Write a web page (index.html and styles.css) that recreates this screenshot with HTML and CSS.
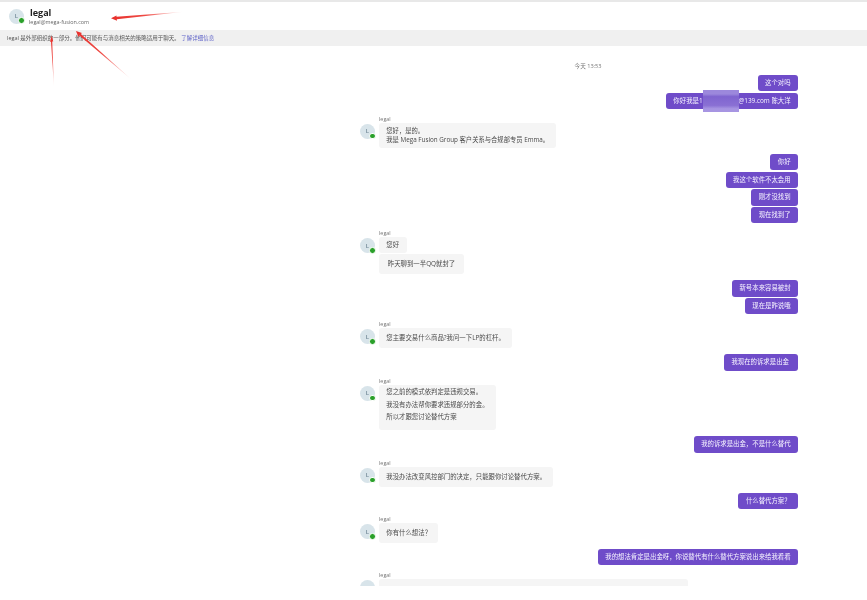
FILE: index.html
```html
<!DOCTYPE html>
<html lang="zh">
<head>
<meta charset="utf-8">
<title>legal</title>
<link rel="stylesheet" href="styles.css">
</head>
<body>
<div class="page">
  <header class="head">
    <div class="avatar avatar-big">L<span class="dot"></span></div>
    <div class="who">
      <div class="name">legal</div>
      <div class="mail">legal@mega-fusion.com</div>
    </div>
  </header>
  <div class="banner">legal 是外部组织的一部分。他们可能有与消息相关的策略适用于聊天。 <a class="link">了解详细信息</a></div>
  <main class="chat">
    <div class="time">今天 13:53</div>
    <section class="mine">
      <div class="out">这个对吗</div>
      <div class="out">你好我是1<span class="hidden-part"></span>@139.com 陈大洋</div>
    </section>
    <section class="theirs">
      <div class="avatar">L<span class="dot"></span></div>
      <div class="col">
        <div class="sender">legal</div>
        <div class="in in-tall">您好&#xFF0C;是的。<br>我是 Mega Fusion Group 客户关系与合规部专员 Emma。</div>
      </div>
    </section>
    <section class="mine">
      <div class="out">你好</div>
      <div class="out">我这个软件不太会用</div>
      <div class="out">刚才没找到</div>
      <div class="out">现在找到了</div>
    </section>
    <section class="theirs">
      <div class="avatar">L<span class="dot"></span></div>
      <div class="col">
        <div class="sender">legal</div>
        <div class="in in-short">您好</div>
        <div class="in in-wide">昨天聊到一半QQ就封了</div>
      </div>
    </section>
    <section class="mine">
      <div class="out">新号本来容易被封</div>
      <div class="out">现在是昨说哦</div>
    </section>
    <section class="theirs">
      <div class="avatar">L<span class="dot"></span></div>
      <div class="col">
        <div class="sender">legal</div>
        <div class="in">您主要交易什么商品?我问一下LP的杠杆。</div>
      </div>
    </section>
    <section class="mine">
      <div class="out">我现在的诉求是出金&nbsp;</div>
    </section>
    <section class="theirs">
      <div class="avatar">L<span class="dot"></span></div>
      <div class="col">
        <div class="sender">legal</div>
        <div class="in in-lines">
          <p>您之前的模式依判定是违规交易。</p>
          <p>我没有办法帮你要求违规部分的金。</p>
          <p>所以才跟您讨论替代方案</p>
        </div>
      </div>
    </section>
    <section class="mine">
      <div class="out">我的诉求是出金&#xFF0C;不是什么替代</div>
    </section>
    <section class="theirs">
      <div class="avatar">L<span class="dot"></span></div>
      <div class="col">
        <div class="sender">legal</div>
        <div class="in">我没办法改变风控部门的决定&#xFF0C;只能跟你讨论替代方案。</div>
      </div>
    </section>
    <section class="mine">
      <div class="out">什么替代方案&#xFF1F;</div>
    </section>
    <section class="theirs">
      <div class="avatar">L<span class="dot"></span></div>
      <div class="col">
        <div class="sender">legal</div>
        <div class="in">你有什么想法&#xFF1F;</div>
      </div>
    </section>
    <section class="mine">
      <div class="out">我的想法肯定是出金呀&#xFF0C;你说替代有什么替代方案说出来给我看看</div>
    </section>
    <section class="theirs">
      <div class="avatar">L<span class="dot"></span></div>
      <div class="col">
        <div class="sender">legal</div>
        <div class="in in-cut"></div>
      </div>
    </section>
  </main>
</div>
<div class="patch"></div>
<svg class="marks" width="867" height="600" viewBox="0 0 867 600" aria-hidden="true">
  <defs>
    <linearGradient id="fa" gradientUnits="userSpaceOnUse" x1="112" y1="18" x2="184" y2="12"><stop offset="0" stop-color="#e8302c"/><stop offset=".45" stop-color="#ee4a44"/><stop offset="1" stop-color="#ee3a34" stop-opacity="0"/></linearGradient>
    <linearGradient id="fb" gradientUnits="userSpaceOnUse" x1="76" y1="31" x2="132" y2="80"><stop offset="0" stop-color="#e8302c"/><stop offset=".45" stop-color="#ee4a44"/><stop offset="1" stop-color="#ee3a34" stop-opacity="0"/></linearGradient>
    <linearGradient id="fc" gradientUnits="userSpaceOnUse" x1="52" y1="36" x2="54" y2="88"><stop offset="0" stop-color="#e8302c"/><stop offset=".45" stop-color="#ee4a44"/><stop offset="1" stop-color="#ee3a34" stop-opacity="0"/></linearGradient>
  </defs>
  <polygon fill="url(#fa)" points="111,18.3 116.5,15.4 116.5,16.8 184,11.7 116.8,19.2 117,20.7"/>
  <polygon fill="url(#fb)" points="76,31 82,33 80.9,34 132,80 79.4,35.6 78.4,37"/>
  <polygon fill="url(#fc)" points="51.7,35.5 53.2,41.5 52.2,41.5 54,88 51,41.7 50,41.8"/>
</svg>
</body>
</html>
```
FILE: styles.css
```css
* { box-sizing: border-box; }
html, body { margin: 0; padding: 0; background: #fff; }
body {
  width: 867px;
  height: 600px;
  overflow: hidden;
  position: relative;
  font-family: "Open Sans", "Noto Sans CJK SC", sans-serif;
  color: #333;
}
.page { height: 586px; overflow: hidden; border-top: 2px solid #e8e8e8; filter: blur(.3px); }
.head { height: 28px; display: flex; align-items: center; padding: 0 0 0 9px; gap: 5px; }
.who { padding-top: 2px; }
.name { font-size: 9px; line-height: 10px; font-weight: 700; color: #222; padding-left: 1px; }
.mail { font-size: 5.4px; line-height: 8px; color: #666; }
.avatar {
  position: relative;
  flex: none;
  width: 15px;
  height: 15px;
  border-radius: 50%;
  background: #d8e4ea;
  color: #6f8794;
  font-size: 6px;
  font-weight: 600;
  display: flex;
  align-items: center;
  justify-content: center;
}
.dot {
  position: absolute;
  right: 0;
  bottom: .5px;
  width: 4.6px;
  height: 4.6px;
  border-radius: 50%;
  background: #2aa02a;
  border: 1px solid #fff;
  box-sizing: content-box;
  margin: -1px;
}
.banner {
  height: 16px;
  background: #f0f0f0;
  padding: 0 0 0 7px;
  font-size: 5.5px;
  line-height: 16px;
  color: #555;
}
.link { color: #5b5fc7; }
.chat { padding: 15px 69px 0 360px; }
.time { font-size: 5.6px; line-height: 10px; color: #777; text-align: center; margin-left: 116px; width: 224px; }
.mine { display: flex; flex-direction: column; align-items: flex-end; gap: 1.2px; margin-top: 6px; }
.time + .mine { margin-top: 4px; }
.out {
  height: 16.4px;
  line-height: 16.4px;
  padding: 0 7.4px;
  border-radius: 3px;
  background: #6f4cc9;
  color: #f7f4ff;
  font-size: 6.4px;
  white-space: nowrap;
}
.hidden-part { display: inline-block; width: 36px; }
.theirs { display: flex; gap: 4px; margin-top: 8px; align-items: flex-start; }
.theirs .avatar { margin-top: 7px; }
.col { display: flex; flex-direction: column; align-items: flex-start; gap: 1px; }
.sender { font-size: 5.4px; line-height: 5px; color: #777; height: 5px; }
.in {
  min-height: 20px;
  padding: 0 7.3px;
  border-radius: 3px;
  background: #f5f5f5;
  color: #4a4a4a;
  font-size: 6.4px;
  line-height: 19px;
  white-space: nowrap;
}
.in-tall { min-height: 25px; font-size: 6.3px; line-height: 9.4px; padding-top: 3px; padding-bottom: 3px; }
.in-short { min-height: 16.4px; line-height: 16px; padding-right: 8px; }
.in-wide { padding: 0 8.8px; }
.in-lines { padding-top: 1px; padding-bottom: 6px; }
.in-lines p { margin: 0; line-height: 12.8px; }
.in-cut { width: 309px; height: 40px; }
.patch {
  position: absolute;
  left: 703px;
  top: 89.5px;
  width: 36px;
  height: 22.5px;
  background: linear-gradient(#9c88dc, #9c88dc 18%, #7f64cf 30%, #8a70d4 70%, #a795e2 85%, #a795e2);
  filter: blur(.3px);
}
.marks { position: absolute; left: 0; top: 0; pointer-events: none; }
```
